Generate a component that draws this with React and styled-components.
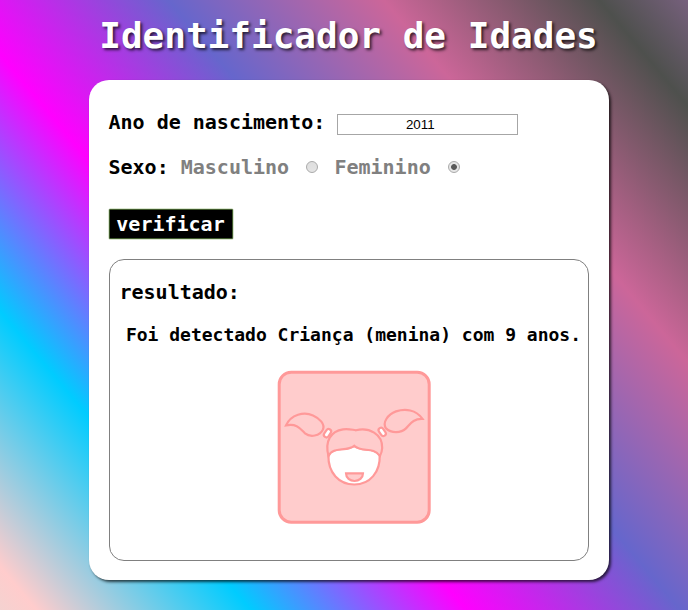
import React from 'react';
import styled, { createGlobalStyle } from 'styled-components';

const GlobalStyle = createGlobalStyle`
  html, body { margin: 0; }
  body {
    height: 610px;
    overflow: hidden;
    font: bold 20px "DejaVu Sans Mono", monospace;
    color: #000;
    background: linear-gradient(50deg, #f4d2d0 0, #ffcccc 28px, #00ccff 192px, #ff00ff 357px, #6666cc 521px, #cc6699 686px, #4e504d 851px, #76607c 919px);
  }
  *, *::before, *::after { box-sizing: border-box; }
`;

const Page = styled.div`
  display: flex;
  flex-direction: column;
  align-items: center;
  height: 610px;
  padding-left: 9px;
`;

const Title = styled.h1`
  margin: 15px 0 0;
  height: 65px;
  font-size: 36px;
  line-height: 42px;
  color: #fff;
  white-space: nowrap;
  text-shadow: 2px 2px 3px rgba(0, 0, 0, 0.7);
`;

const Card = styled.section`
  width: 520px;
  height: 500px;
  padding: 30px 20px 20px;
  border-radius: 20px;
  background: #fff;
  box-shadow: 2px 2px 3px rgba(0, 0, 0, 0.7);
`;

const Field = styled.div`
  display: flex;
  height: 24px;
  line-height: 24px;
  white-space: pre;
  margin-bottom: ${(p) => p.$gap}px;
`;

const YearInput = styled.input`
  width: 181px;
  height: 21px;
  margin: 4px 0 0 11.5px;
  padding: 0 14px 0 0;
  border: 1px solid #a6a6a6;
  background: #fff;
  font: 13.333px "Liberation Sans", Arial, sans-serif;
  text-align: center;
  color: #000;
  outline: none;
`;

const Option = styled.label`
  display: flex;
  margin-left: 12px;
  color: #808080;

  & + & { margin-left: 16px; }
`;

const Radio = styled.input`
  appearance: none;
  width: 12px;
  height: 12px;
  margin: 6px 0 0 17.3px;
  border: 1px solid #aaa;
  border-radius: 50%;
  background: linear-gradient(#dedede, #e4e4e4);

  &:checked {
    background: radial-gradient(circle, #5a5a5a 0 2.5px, #e6e6e6 3.3px);
  }
`;

const Button = styled.button`
  display: block;
  width: 124px;
  height: 30px;
  margin: 0 0 20px;
  padding: 0 0 1px;
  border: 1px solid #3f5a2c;
  border-radius: 1px;
  box-shadow: 0 0 0 0.5px #b4cba0;
  background: #000;
  color: #fff;
  font: inherit;
  line-height: 26px;
`;

const Result = styled.div`
  display: flex;
  flex-direction: column;
  height: 302px;
  padding: 20px 7px 0 10px;
  border: 1px solid #808080;
  border-radius: 15px;
  line-height: 24px;
`;

const Detected = styled.p`
  margin: 20px 0 24px 6.4px;
  font-size: 18px;
  line-height: 22px;
  white-space: nowrap;
`;

const Portrait = styled.svg`
  display: block;
  width: 154px;
  height: 154px;
  margin-left: 157.5px;
`;

function Girl() {
  return (
    <Portrait viewBox="277 370 154 154" fill="#fcc" stroke="#f99" strokeWidth="2.2">
      <rect x="279.200" y="372.200" width="150" height="150" rx="12" strokeWidth="3" />
      <g transform="translate(0 0.4)">
        <path d="M286 425 C291 414 304 411 313 415 C320 418 325 424 323 429 C320 436 310 437 305 433 C300 428 297 423 286 425Z" />
        <path d="M422.500 418.500 C416 409 405 408 396 411 C388 414 382 422 386 428 C391 433 401 433 406 428 C410 424 413 418 422.500 418.500Z" />
        <rect x="325" y="428.300" width="5" height="9" rx="2.500" fill="#fff" transform="rotate(34 327.500 432.800)" />
        <rect x="379.700" y="427" width="5" height="9" rx="2.500" fill="#fff" transform="rotate(-34 382.200 431.500)" />
      </g>
      <path d="M328.400 455 C328 473 339 484.500 354.300 484.500 C370 484.500 380.500 472 379.700 455 C373 446 362 453 354.200 445.800 C346 452 334 446 328.400 455Z" fill="#fff" />
      <path d="M328.500 456 C324.500 441 331 431 343 429.300 C349 428.500 352 429.800 356 430.300 C369 427 382.500 434 382.200 448 C382 452 381 454 379.900 456 C373 446 362 453 354.200 445.800 C346 452 333 446 328.500 456Z" />
      <path d="M346 473.300 H363 C363 478 359 481 354.500 481 C350 481 346 478 346 473.300Z" />
    </Portrait>
  );
}

export default function App() {
  return (
    <>
      <GlobalStyle />
      <Page>
        <Title>Identificador de Idades</Title>
        <Card>
          <Field $gap={21}>
            <label htmlFor="year">Ano de nascimento:</label>
            <YearInput id="year" defaultValue="2011" />
          </Field>
          <Field $gap={30}>
            <span>Sexo:</span>
            <Option>Masculino<Radio type="radio" name="sex" /></Option>
            <Option>Feminino<Radio type="radio" name="sex" defaultChecked /></Option>
          </Field>
          <Button>verificar</Button>
          <Result>
            <div>resultado:</div>
            <Detected>Foi detectado Criança (menina) com 9 anos.</Detected>
            <Girl />
          </Result>
        </Card>
      </Page>
    </>
  );
}
